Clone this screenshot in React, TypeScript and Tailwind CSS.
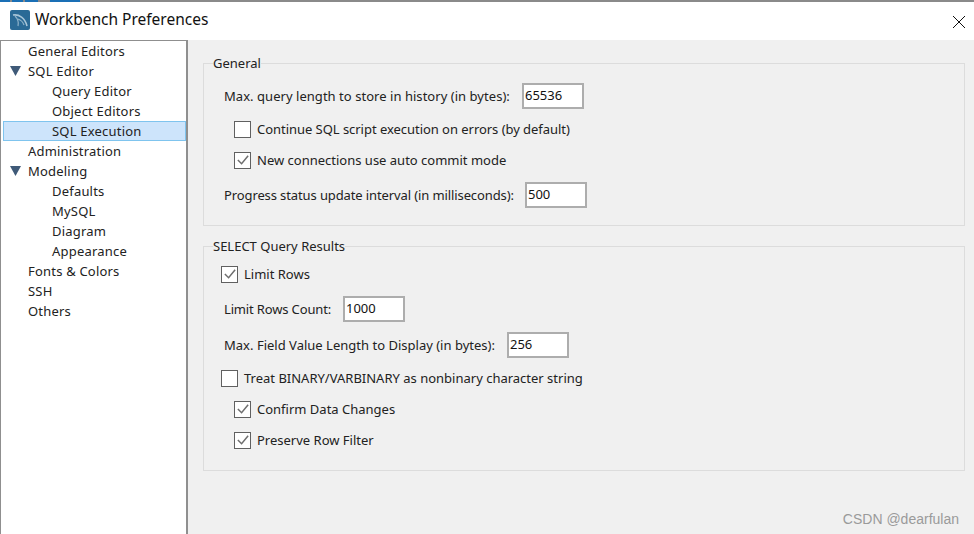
function Check({ checked }: { checked?: boolean }) {
  return (
    <span className="flex items-center justify-center w-[17px] h-[17px] border-[1.5px] border-[#606060] bg-white shrink-0">
      {checked && (
        <svg viewBox="0 0 15 15" className="w-[14px] h-[14px]" fill="none" stroke="#6e6e6e" strokeWidth="1.6">
          <path d="M2 7.5 L6 11.5 L13 3" />
        </svg>
      )}
    </span>
  )
}

function CheckRow({ label, checked, indent, mt, tracking = '' }: { label: string; checked?: boolean; indent: string; mt: string; tracking?: string }) {
  return (
    <div className={`flex items-center gap-[6px] h-[18px] ${indent} ${mt}`}>
      <Check checked={checked} />
      <span className={`pt-[2px] ${tracking}`}>{label}</span>
    </div>
  )
}

function Field({ label, value, width, mt, tracking }: { label: string; value: string; width: string; mt: string; tracking: string }) {
  return (
    <div className={`flex items-center pl-[20px] h-[26px] ${mt}`}>
      <span className={`pt-[2px] whitespace-nowrap ${width} ${tracking}`}>{label}</span>
      <span className="w-[62px] h-[26px] border-2 border-[#adadad] bg-white pl-[1px] leading-[21px] text-[#111]">{value}</span>
    </div>
  )
}

function TreeItem({ label, level, open, selected }: { label: string; level: number; open?: boolean; selected?: boolean }) {
  return (
    <div className={`relative h-5 leading-[20px] tracking-[0.2px] whitespace-nowrap ${level === 1 ? 'pl-[51px]' : 'pl-[27px]'}`}>
      {selected && <div className="absolute left-[2px] right-0 top-0 h-5 bg-[#cde4fb] border border-[#7fc4ee]" />}
      {open && (
        <svg viewBox="0 0 11 10" className="absolute left-[9px] top-[5px] w-[11px] h-[10px]">
          <path d="M0 0 H11 L5.5 10 Z" fill="#3f5a78" />
        </svg>
      )}
      <span className="relative">{label}</span>
    </div>
  )
}

export default function App() {
  return (
    <div className="relative flex flex-col w-[974px] h-[534px] overflow-hidden bg-[#f0f0f0] font-['Noto_Sans',sans-serif] text-[13px] text-[#222]">
      {/* Title bar */}
      <div className="h-[40px] shrink-0 bg-white border-t-2 border-[#8a8a8a] flex items-center pl-[10px] pb-[2px] relative">
        {/* sliver of the window behind */}
        <div className="absolute left-0 top-[-2px] flex h-[2px]">
          <div className="w-[10px] bg-[#1a6fb5]" />
          <div className="w-[11px] ml-[2px] bg-[#1a6fb5]" />
          <div className="w-[13px] ml-[2px] bg-[#1a6fb5]" />
          <div className="w-[30px] ml-[12px] bg-[#1a6fb5]" />
        </div>
        <svg viewBox="0 0 20 20" className="w-5 h-5 shrink-0">
          <rect width="20" height="20" rx="2" fill="#2a6a96" />
          <path d="M3 5 C9 4 15 8 17 16" fill="none" stroke="#a9c6d8" strokeWidth="1.6" />
          <path d="M5 6 C8 9 9 12 8 16 M8 9 C11 10 13 12 14 15" fill="none" stroke="#8db2c9" strokeWidth="1.2" />
        </svg>
        <span className="ml-[5px] text-[15.5px] text-[#111]">Workbench Preferences</span>
        <svg viewBox="0 0 14 14" className="absolute right-[8px] top-[13px] w-[14px] h-[14px]" stroke="#111" strokeWidth="1">
          <path d="M1 1 L13 13 M13 1 L1 13" />
        </svg>
      </div>

      <div className="flex flex-1 min-h-0">
        {/* Tree */}
        <div className="w-[188px] shrink-0 bg-white border-l border-r-2 border-t border-[#8f8f8f]">
          <TreeItem label="General Editors" level={0} />
          <TreeItem label="SQL Editor" level={0} open />
          <TreeItem label="Query Editor" level={1} />
          <TreeItem label="Object Editors" level={1} />
          <TreeItem label="SQL Execution" level={1} selected />
          <TreeItem label="Administration" level={0} />
          <TreeItem label="Modeling" level={0} open />
          <TreeItem label="Defaults" level={1} />
          <TreeItem label="MySQL" level={1} />
          <TreeItem label="Diagram" level={1} />
          <TreeItem label="Appearance" level={1} />
          <TreeItem label="Fonts & Colors" level={0} />
          <TreeItem label="SSH" level={0} />
          <TreeItem label="Others" level={0} />
        </div>

        {/* Settings */}
        <div className="flex-1 pl-[15px] pr-[9px] pt-[14px]">
          <fieldset className="h-[172px] border border-[#dcdcdc] pl-0">
            <legend className="ml-[9px] leading-[18px]">General</legend>
            <div className="pt-[11px]">
              <Field label="Max. query length to store in history (in bytes):" value="65536" width="w-[298px]" tracking="tracking-[0.04px]" mt="" />
              <CheckRow label="Continue SQL script execution on errors (by default)" indent="pl-[30px]" mt="mt-[11px]" tracking="tracking-[-0.04px]" />
              <CheckRow label="New connections use auto commit mode" checked indent="pl-[30px]" mt="mt-[13px]" />
              <Field label="Progress status update interval (in milliseconds):" value="500" width="w-[301px]" tracking="tracking-[-0.11px]" mt="mt-[13px]" />
            </div>
          </fieldset>
          <fieldset className="h-[234px] mt-[11px] border border-[#dcdcdc]">
            <legend className="ml-[9px] leading-[18px]">SELECT Query Results</legend>
            <div className="pt-[10px]">
              <CheckRow label="Limit Rows" checked indent="pl-[17px]" mt="" />
              <Field label="Limit Rows Count:" value="1000" width="w-[119px]" tracking="tracking-[-0.15px]" mt="mt-[13px]" />
              <Field label="Max. Field Value Length to Display (in bytes):" value="256" width="w-[283px]" tracking="tracking-[0.01px]" mt="mt-[10px]" />
              <CheckRow label="Treat BINARY/VARBINARY as nonbinary character string" indent="pl-[17px]" mt="mt-[11px]" />
              <CheckRow label="Confirm Data Changes" checked indent="pl-[30px]" mt="mt-[13px]" />
              <CheckRow label="Preserve Row Filter" checked indent="pl-[30px]" mt="mt-[13px]" />
            </div>
          </fieldset>
        </div>
      </div>

      {/* Watermark */}
      <span className="absolute right-[15px] top-[511px] font-['Liberation_Sans',sans-serif] text-[14px] leading-[16px] text-[#9a9a9a]">CSDN @dearfulan</span>
    </div>
  )
}
